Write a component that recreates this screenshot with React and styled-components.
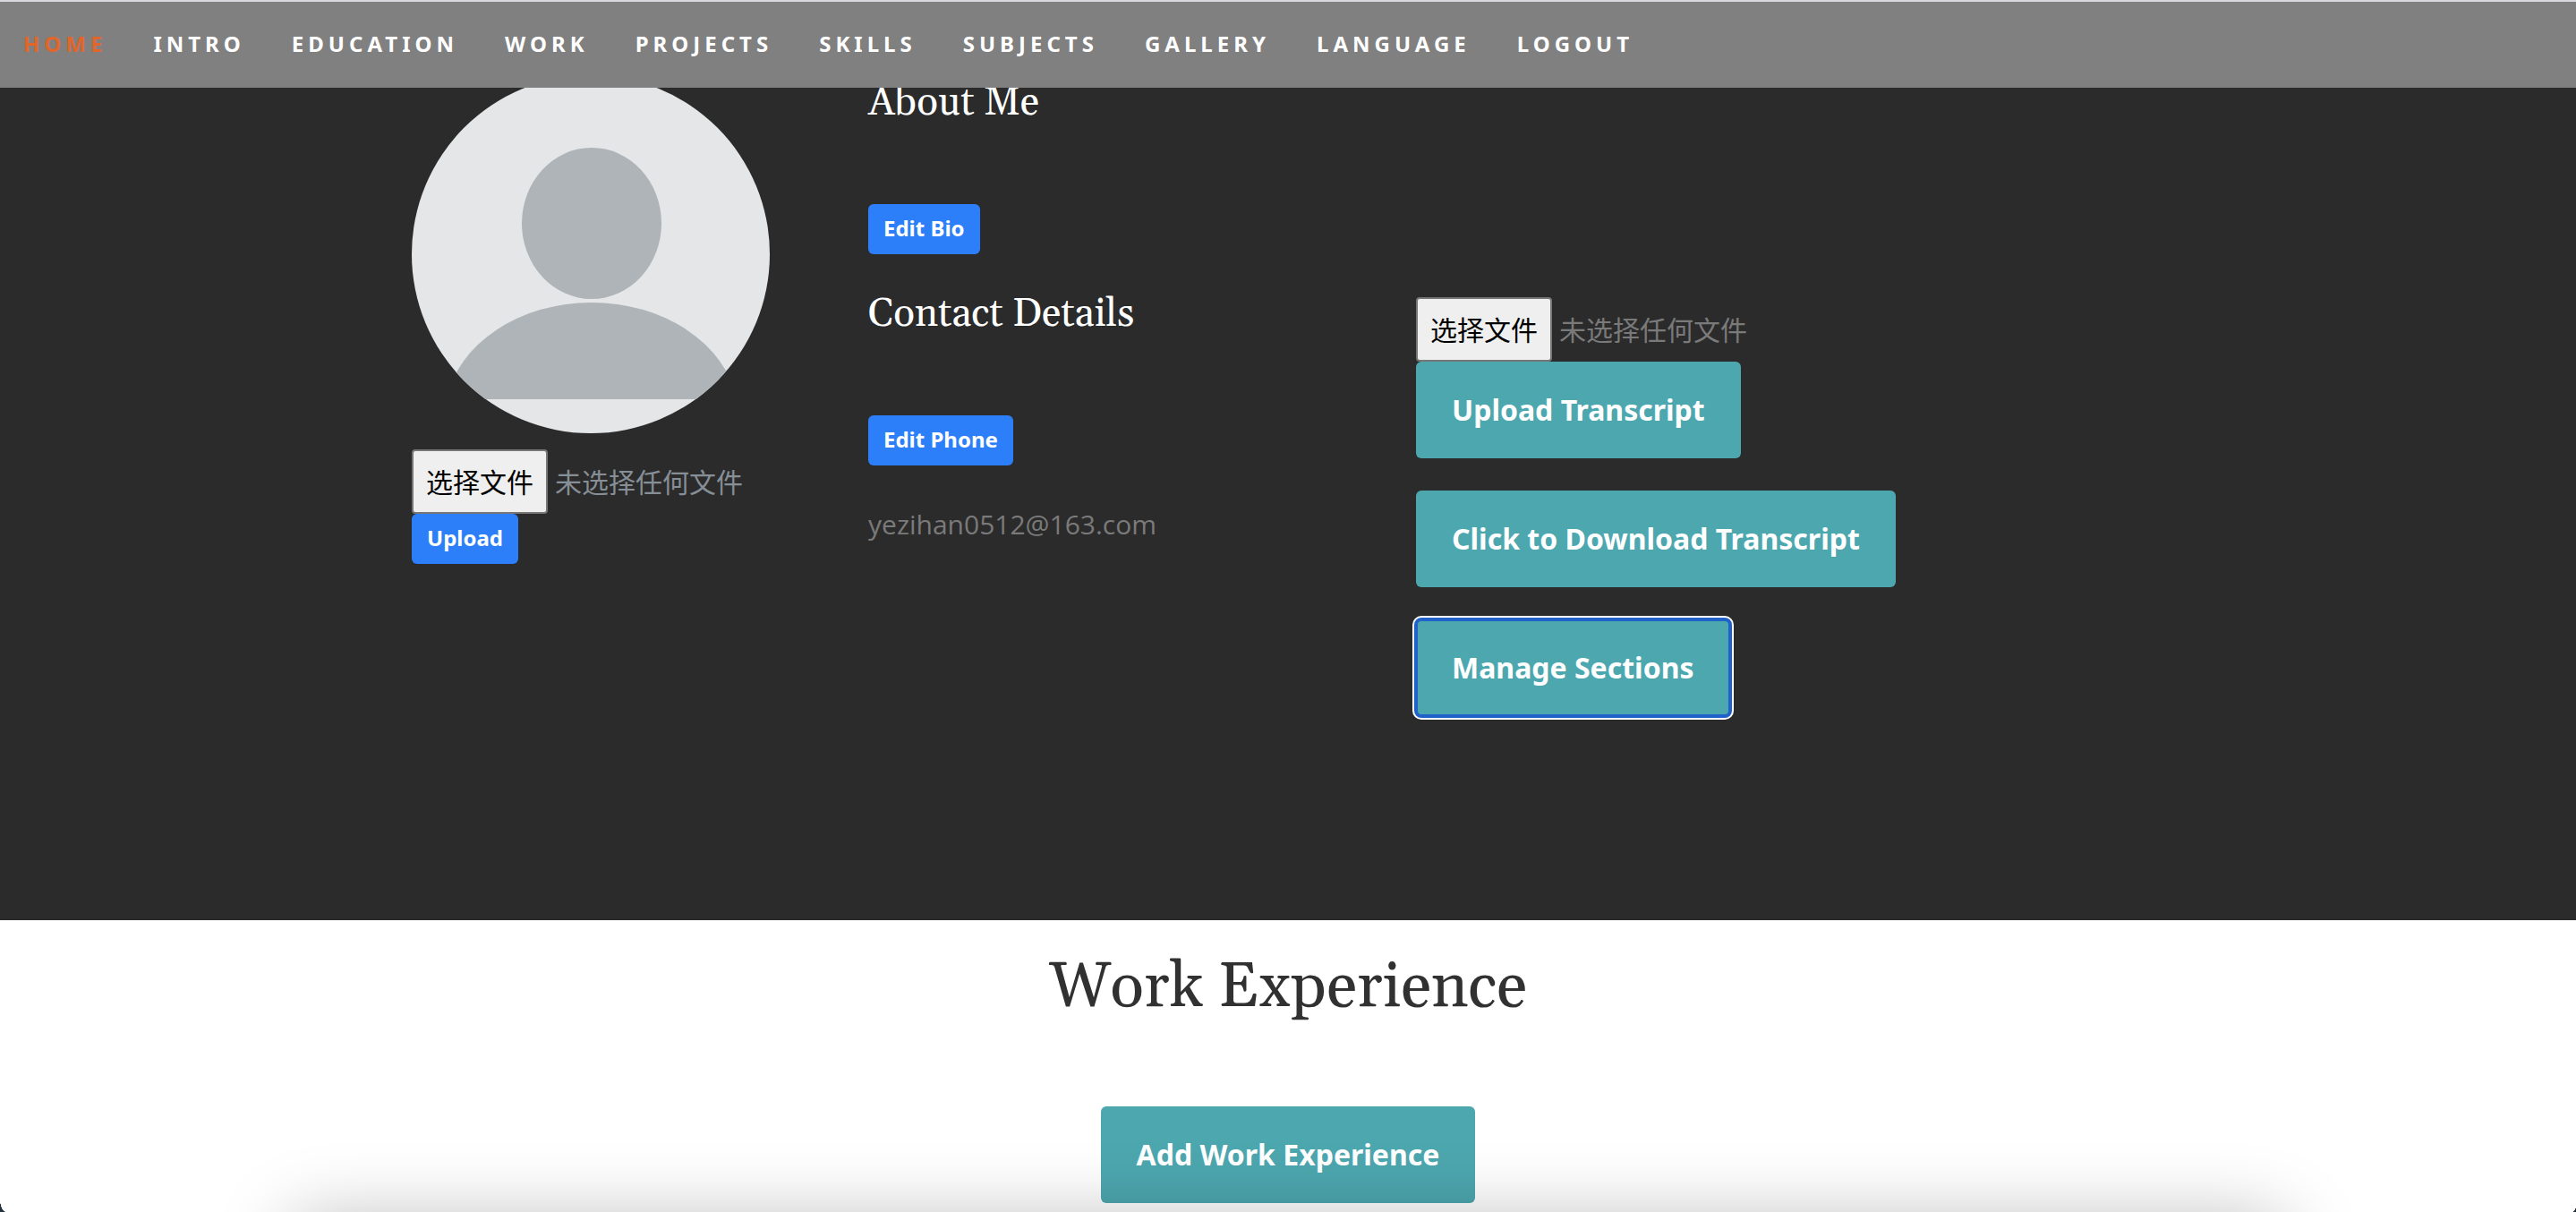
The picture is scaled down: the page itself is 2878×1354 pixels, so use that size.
import React from "react";
import styled, { createGlobalStyle, css } from "styled-components";

const sans = `"Open Sans", "Noto Sans CJK SC", sans-serif`;
const boldSans = `"Noto Sans", "Open Sans", sans-serif`;
const serif = `Georgia, Gelasio, "Liberation Serif", serif`;

const GlobalStyle = createGlobalStyle`
  *, *::before, *::after { box-sizing: border-box; }
  html, body { margin: 0; background: #fff; }
  body {
    font-family: ${sans};
    font-size: 30px;
    line-height: 60px;
    color: #7a7a7a;
    overflow: hidden;
  }
  h1, h2, p, ul { margin: 0; padding: 0; font-weight: 400; }
`;

const NavBar = styled.nav`
  position: fixed;
  inset: 0 0 auto;
  z-index: 2;
  height: 98px;
  background: #808080;
  border-top: 2px solid #d8d8de;
`;

const NavList = styled.ul`
  display: flex;
  height: 100%;
  align-items: center;
  list-style: none;
`;

const NavLink = styled.a`
  display: block;
  padding: 0 26px 2px;
  font: 700 24px/48px ${boldSans};
  letter-spacing: 5px;
  text-decoration: none;
  color: ${(p) => (p.$current ? "#e0662a" : "#fff")};
`;

const About = styled.section`
  background: #2b2b2b;
  padding: 84px 24px 228px;
`;

const Row = styled.div`
  display: grid;
  grid-template-columns: 510px 1fr;
  max-width: 1958px;
  margin: 0 auto;
`;

const Profile = styled.div`
  display: flex;
  flex-direction: column;
  align-items: flex-start;
`;

const Avatar = styled.svg`
  display: block;
  width: 400px;
  height: 400px;
  margin-bottom: 18px;
  border-radius: 50%;
`;

const Details = styled.div`
  display: flex;
  flex-direction: column;
  gap: 48px;
  padding-top: 12px;
`;

const ContactRow = styled.div`
  display: grid;
  grid-template-columns: 612px 1fr;
`;

const Heading = styled.h2`
  margin-bottom: 94px;
  font-family: ${serif};
  font-size: 44px;
  line-height: 38px;
  color: #fff;
`;

const Email = styled.p`
  margin-top: 36px;
`;

const Actions = styled.div`
  display: flex;
  flex-direction: column;
  align-items: flex-start;
  gap: 36px;
`;

const UploadForm = styled.div`
  display: flex;
  flex-direction: column;
  align-items: flex-start;
`;

const SmallButton = styled.button`
  display: block;
  height: 56px;
  padding: 0 17px 2px;
  border: 0;
  border-radius: 6px;
  background: #2d7ff9;
  color: #fff;
  font: 700 24px/52px ${boldSans};
`;

const BigButton = styled.button`
  display: block;
  padding: 24px 40px;
  border: 0;
  border-radius: 6px;
  background: #4da7af;
  color: #fff;
  font: 700 32px/60px ${boldSans};
  ${(p) =>
    p.$focused &&
    css`
      outline: 4px solid #2062c9;
      outline-offset: -2px;
      box-shadow: 0 0 0 4px #fff;
    `}
`;

const FileLabel = styled.label`
  display: flex;
  align-items: center;
  gap: 8px;
  height: 72px;
  line-height: 70px;
  color: ${(p) => p.$tone};
`;

const FileInput = styled.input`
  position: absolute;
  width: 1px;
  height: 1px;
  opacity: 0;
`;

const FileFace = styled.span`
  height: 72px;
  padding: 0 14px;
  border: 2px solid #767676;
  border-radius: 4px;
  background: #efefef;
  color: #000;
  line-height: 70px;
`;

const FileStatus = styled.span`
  padding-top: 2px;
`;

const Work = styled.section`
  display: flex;
  flex-direction: column;
  align-items: center;
  gap: 90px;
  padding: 34px 24px 10px;
`;

const Title = styled.h1`
  font-family: ${serif};
  font-size: 70px;
  line-height: 84px;
  color: #313131;
`;

const DockShadow = styled.div`
  position: fixed;
  z-index: 3;
  left: 324px;
  right: 324px;
  bottom: -90px;
  height: 80px;
  border-radius: 24px;
  box-shadow: 0 0 84px rgba(0, 0, 0, 0.28);
  pointer-events: none;
`;

const Corner = styled.div`
  position: fixed;
  z-index: 4;
  bottom: 0;
  ${(p) => p.$side}: 0;
  width: ${(p) => p.$size}px;
  height: ${(p) => p.$size * 2}px;
  background: radial-gradient(
    ellipse farthest-side at ${(p) => (p.$side === "left" ? "100%" : "0")} 0,
    transparent 98%,
    #25333d 100%
  );
`;

const links = [
  "HOME", "INTRO", "EDUCATION", "WORK", "PROJECTS",
  "SKILLS", "SUBJECTS", "GALLERY", "LANGUAGE", "LOGOUT",
];

function FilePicker({ id, tone }) {
  return (
    <FileLabel htmlFor={id} $tone={tone}>
      <FileInput id={id} type="file" />
      <FileFace>选择文件</FileFace>
      <FileStatus>未选择任何文件</FileStatus>
    </FileLabel>
  );
}

export default function App() {
  return (
    <>
      <GlobalStyle />
      <NavBar>
        <NavList>
          {links.map((name) => (
            <li key={name}>
              <NavLink href={`#${name.toLowerCase()}`} $current={name === "HOME"}>
                {name}
              </NavLink>
            </li>
          ))}
        </NavList>
      </NavBar>
      <main>
        <About id="intro">
          <Row>
            <Profile>
              <Avatar viewBox="0 0 400 400" aria-hidden="true">
                <rect width="400" height="400" fill="#e4e6e8" />
                <ellipse cx="201" cy="165.5" rx="78" ry="84.5" fill="#aeb4b7" />
                <path d="M39 362A164 128 0 0 1 363 362Z" fill="#aeb4b7" />
              </Avatar>
              <FilePicker id="avatar-file" tone="#868e96" />
              <SmallButton type="button">Upload</SmallButton>
            </Profile>
            <Details>
              <div>
                <Heading>About Me</Heading>
                <SmallButton type="button">Edit Bio</SmallButton>
              </div>
              <ContactRow>
                <div>
                  <Heading>Contact Details</Heading>
                  <SmallButton type="button">Edit Phone</SmallButton>
                  <Email>yezihan0512@163.com</Email>
                </div>
                <Actions>
                  <UploadForm>
                    <FilePicker id="transcript-file" tone="#7a7a7a" />
                    <BigButton type="button">Upload Transcript</BigButton>
                  </UploadForm>
                  <BigButton type="button">Click to Download Transcript</BigButton>
                  <BigButton type="button" $focused>Manage Sections</BigButton>
                </Actions>
              </ContactRow>
            </Details>
          </Row>
        </About>
        <Work id="work">
          <Title>Work Experience</Title>
          <BigButton type="button">Add Work Experience</BigButton>
        </Work>
      </main>
      <DockShadow />
      <Corner $side="left" $size={7} />
      <Corner $side="right" $size={4} />
    </>
  );
}
